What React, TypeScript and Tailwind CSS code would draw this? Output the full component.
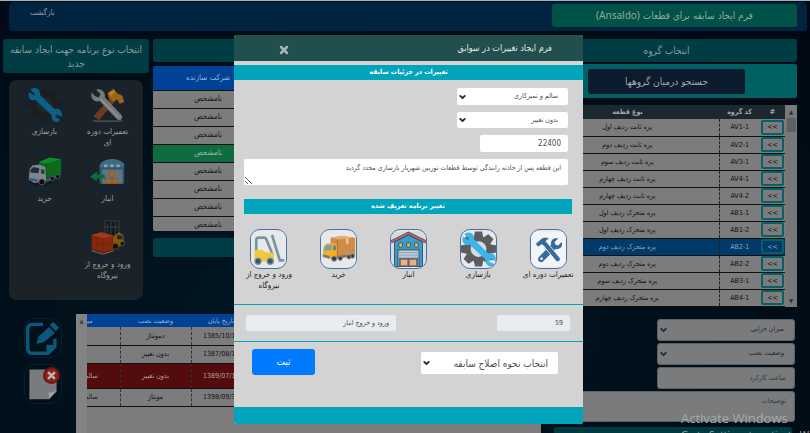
import type { ReactNode } from "react";
import { ChevronDown, X } from "lucide-react";

/* ---------- drawings ---------- */

const WRENCH =
  "M5 3 L10 8 L8 11 L3 7 C1 12 5 16 10 14 L29 32 C28 38 33 41 37 38 L32 34 L34 30 L39 33 C40 27 35 24 31 26 L14 9 C15 3 10 0 5 3 Z";

function Gear({ color, hole }: { color: string; hole: string }) {
  return (
    <g fill={color}>
      {[0, 45, 90, 135, 180, 225, 270, 315].map((a) => (
        <path key={a} d="M16 0 H24 L26 9 H14 Z" transform={`rotate(${a} 20 20)`} />
      ))}
      <circle cx="20" cy="20" r="14" />
      <circle cx="20" cy="20" r="9" fill={hole} />
    </g>
  );
}

function WrenchGear({ dim }: { dim?: boolean }) {
  return (
    <svg viewBox="0 0 40 40" className="h-full w-full">
      <Gear color={dim ? "#1b1f22" : "#5b5d60"} hole={dim ? "#20272c" : "#d9dcdf"} />
      <path
        d={WRENCH}
        fill={dim ? "#0c6189" : "#3bb5ea"}
        stroke={dim ? "#0c6189" : "#3bb5ea"}
        strokeWidth="1.5"
      />
      <circle cx="34" cy="34" r="1.5" fill={dim ? "#20272c" : "#e6eaed"} />
    </svg>
  );
}

function HammerWrench() {
  return (
    <svg viewBox="0 0 40 40" className="h-full w-full">
      <path d="M23 13 L28 17 L10 38 L4 33 Z" fill="#6d3a1e" />
      <path d="M20 7 L27 2 L31 7 L37 10 L39 17 L34 19 L31 14 L27 17 L22 13 Z" fill="#9a6415" />
      <path d="M21 7 L27 3 L29 6 L24 10 Z" fill="#b57f22" />
      <path
        d="M7 3 L12 8 L10 12 L5 10 L2 6 C0 13 5 18 11 16 L31 37 C34 40 39 36 36 32 L17 12 C18 6 13 1 7 3 Z"
        fill="#75797c"
      />
      <path d="M12 14 L33 35" stroke="#94989b" strokeWidth="1.5" />
      <path d="M3 39 H37" stroke="#55595c" strokeWidth="1.5" />
    </svg>
  );
}

function HammerWrenchFlat() {
  return (
    <svg viewBox="0 0 40 40" className="h-full w-full">
      <rect width="40" height="40" fill="#f3f4f6" />
      <g fill="#356c9f">
        <path d="M31 8 L27 12 L28 15 L31 16 L35 12 C37 17 33 21 28 20 L14 34 C10 37 6 33 9 29 L23 15 C22 10 26 7 31 8 Z" />
        <path
          d="M5 14 L12 8 C15 6 18 6 21 8 L17 11 L33 30 C35 34 30 36 28 33 L14 16 L12 15 L8 18 Z"
          stroke="#f3f4f6"
          strokeWidth="1"
        />
      </g>
      <circle cx="12" cy="31" r="1.5" fill="#f3f4f6" />
    </svg>
  );
}

function GreenTruck() {
  return (
    <svg viewBox="0 0 40 40" className="h-full w-full">
      <path d="M3 31 L20 35 L39 25 L39 28 L20 37 L4 34 Z" fill="#11161a" />
      <path d="M14 9 L26 4 L39 6 L39 22 L22 27 L14 23 Z" fill="#0c6a1c" />
      <path d="M14 9 L26 4 L39 6 L22 11 Z" fill="#118a28" />
      <path d="M22 11 V27" stroke="#0a5516" />
      <path d="M3 17 L6 13 L14 12 L21 15 L22 31 L8 33 L2 29 Z" fill="#7d858b" />
      <path d="M4 18 L7 15 L14 16 L13 22 L4 21 Z" fill="#1e2c36" />
      <path d="M16 17 L20 18 V23 L16 22 Z" fill="#2a3b47" />
      <path d="M3 27 L12 29 L12 32 L3 30 Z" fill="#2c5a8a" />
      <path d="M22 28 L38 22 L38 26 L22 32 Z" fill="#3a5366" />
      <g fill="#090c0e" stroke="#5b646b" strokeWidth="1">
        <circle cx="17" cy="32" r="3.5" />
        <circle cx="29" cy="28" r="2.5" />
        <circle cx="35" cy="26" r="2.5" />
      </g>
    </svg>
  );
}

function ArrowWarehouse() {
  return (
    <svg viewBox="0 0 40 40" className="h-full w-full">
      <path d="M11 34 V15 C13 3 37 3 39 15 V34 Z" fill="#315a70" />
      <path d="M11 15 H39 V12 C35 4 15 4 11 13 Z" fill="#3c6c84" />
      <path d="M14 34 V18 H37 V34 Z" fill="#64747d" />
      <g fill="#92a2aa">
        <rect x="16" y="12" width="4" height="3" />
        <rect x="23" y="12" width="4" height="3" />
        <rect x="30" y="12" width="4" height="3" />
      </g>
      <g fill="#a06a2d" stroke="#77502a" strokeWidth="0.5">
        <rect x="22" y="20" width="6" height="6" />
        <rect x="18" y="28" width="6" height="6" />
        <rect x="26" y="28" width="6" height="6" />
      </g>
      <path d="M0 26 L8 20 V23.5 H17 V28 H8 V31 Z" fill="#0b6d3d" />
    </svg>
  );
}

function BoxForklift() {
  return (
    <svg viewBox="0 0 40 40" className="h-full w-full">
      <path d="M17 1 H33 V23 H17 Z M20 4 V22 M24 2 V23 M29 2 V23 M17 8 H33" fill="#15191d" stroke="#30363a" strokeWidth="1.5" />
      <path d="M25 20 L33 14 L38 17 L39 28 L32 31 L25 30 Z" fill="#7e5c12" />
      <path d="M31 17 L37 18 V22 L31 22 Z" fill="#20262a" />
      <circle cx="29" cy="30" r="3.5" fill="#0d1012" stroke="#6b5110" />
      <circle cx="37" cy="27" r="2.5" fill="#0d1012" stroke="#6b5110" />
      <path d="M2 17 L13 14 L27 18 L26 34 L15 37 L2 33 Z" fill="#83290f" />
      <path d="M2 17 L13 14 L27 18 L15 21 Z" fill="#9c3c1d" />
      <path d="M15 21 V37 M2 25 L15 29 L27 25 M8 19 V35" stroke="#6b210c" fill="none" strokeWidth="0.5" />
      <path d="M2 35 L15 39 L27 35" stroke="#7a5d3a" fill="none" strokeWidth="1.5" />
    </svg>
  );
}

function Forklift() {
  return (
    <svg viewBox="0 0 40 40" className="h-full w-full">
      <rect width="40" height="40" fill="#e6e8ea" />
      <path d="M6 24 V10 Q6 7 9 7 H15 Q17 7 18 10 L25 27" fill="none" stroke="#7796a0" strokeWidth="3" />
      <path d="M24 4 L33 33 H38" fill="none" stroke="#7796a0" strokeWidth="3" />
      <path d="M4 21 H13 L17 24 H26 V34 H4 Z" fill="#f4c63d" />
      <g fill="#3c5563" stroke="#7796a0" strokeWidth="1.5">
        <circle cx="8" cy="34" r="3.5" />
        <circle cx="22" cy="34" r="3.5" />
      </g>
    </svg>
  );
}

function YellowTruck() {
  return (
    <svg viewBox="0 0 40 40" className="h-full w-full">
      <rect width="40" height="40" fill="#e6e8ea" />
      <path d="M11 7 L24 5 L39 7 V27 L20 30 L11 25 Z" fill="#d08a4a" />
      <path d="M11 7 L24 5 L39 7 L19 9 Z" fill="#e5ab6e" />
      <path d="M19 9 V29" stroke="#b06f35" />
      <path d="M30 8 V14" stroke="#efc894" strokeWidth="3" />
      <path d="M3 17 L6 14 L15 13 L18 15 V29 L9 31 L2 28 Z" fill="#f2b01e" />
      <path d="M4 18 L7 15 L12 15 L12 21 L3 22 Z" fill="#7f9db0" />
      <path d="M14 16 L17 16 V21 L14 21 Z" fill="#5f7c8e" />
      <path d="M2 26 L10 28 V31 L2 29 Z" fill="#787b7d" />
      <path d="M18 28 L38 26 V28 L18 31 Z" fill="#6b6e70" />
      <g fill="#3a3d40" stroke="#94989b" strokeWidth="1">
        <circle cx="15" cy="31" r="3" />
        <circle cx="22" cy="30.5" r="2.5" />
        <circle cx="32" cy="29" r="2.5" />
        <circle cx="36" cy="28" r="2.5" />
      </g>
    </svg>
  );
}

function Warehouse() {
  return (
    <svg viewBox="0 0 40 40" className="h-full w-full">
      <rect width="40" height="40" fill="#d9dcdf" />
      <path d="M4 40 V12 L20 4 L36 12 V40 Z" fill="#3a9cc8" stroke="#2c4a66" strokeWidth="1" />
      <path d="M0 12 L20 2 L40 12" fill="none" stroke="#2c4a66" strokeWidth="3.5" />
      <path d="M0 12 L20 2 L40 12" fill="none" stroke="#d0605e" strokeWidth="2" />
      <g fill="#f5c33b" stroke="#2c4a66" strokeWidth="1">
        <rect x="9" y="13" width="4" height="5" rx="1" />
        <rect x="18" y="13" width="4" height="5" rx="1" />
        <rect x="27" y="13" width="4" height="5" rx="1" />
      </g>
      <rect x="8" y="21" width="24" height="19" fill="#b9c8d6" stroke="#2c4a66" strokeWidth="1" />
      <path d="M8 24 H32 M8 27 H32" stroke="#8fa6ba" strokeWidth="1" />
      <rect x="9" y="30" width="22" height="10" fill="#5b6c80" />
      <g fill="#e8b384" stroke="#8a5a3a" strokeWidth="0.5">
        <rect x="11" y="32" width="8" height="7" />
        <rect x="21" y="32" width="8" height="7" />
      </g>
    </svg>
  );
}

function EditSheet() {
  return (
    <svg viewBox="0 0 40 40" className="h-full w-full">
      <path
        d="M20 4 H8 Q2 4 2 10 V32 Q2 38 8 38 H26 L34 30 V21"
        fill="none"
        stroke="#0b5878"
        strokeWidth="4"
      />
      <path d="M24 38 V28 H35 Z" fill="#0b5878" />
      <path d="M12 27 L15 18 L27 7 L34 14 L21 25 Z" fill="#0b5878" />
      <path d="M28 5 L32 1 L39 8 L35 12 Z" fill="#0b5878" />
    </svg>
  );
}

function DeleteSheet() {
  return (
    <svg viewBox="0 0 40 40" className="h-full w-full">
      <path d="M4 3 H36 V29 L27 38 H4 Z" fill="#797b7c" />
      <path d="M36 27 L27 38 Q28 31 25 30 Q32 31 36 27 Z" fill="#a3a5a6" />
      <circle cx="30" cy="10" r="10" fill="#6e1511" />
      <circle cx="30" cy="10" r="8" fill="#8c211a" />
      <path d="M26 6 L34 14 M34 6 L26 14" stroke="#b9b2b1" strokeWidth="3" />
    </svg>
  );
}

/* ---------- small parts ---------- */

function SelectBox({
  label,
  option,
  box,
  field,
}: {
  label: string;
  option: string;
  box: string;
  field: string;
}) {
  return (
    <div className={`relative shrink-0 ${box}`}>
      <select
        aria-label={label}
        className={`block h-full w-full appearance-none rounded-[3px] border outline-none ${field}`}
      >
        <option>{option}</option>
      </select>
      <ChevronDown
        size={9}
        strokeWidth={5}
        className="pointer-events-none absolute top-1/2 left-[2px] -translate-y-1/2 text-[#222a30]"
      />
    </div>
  );
}

function DarkTile({ label, children }: { label: string; children: ReactNode }) {
  return (
    <button className="flex flex-col items-center text-[8px] leading-[11px] text-[#a0a4a6]">
      <span className="block h-[41px] w-[39px] overflow-hidden rounded-xl border border-[#0c2340] p-px">
        {children}
      </span>
      <span className="mt-px w-12">{label}</span>
    </button>
  );
}

function LightTile({ label, children }: { label: string; children: ReactNode }) {
  return (
    <button className="flex w-[70px] flex-col items-center text-[8px] leading-[11px] font-medium text-[#1c1c1c]">
      <span className="block h-10 w-[37px] overflow-hidden rounded-[10px] border border-[#4a6fa5] bg-[#e6e8ea]">
        {children}
      </span>
      <span className="w-[60px]">{label}</span>
    </button>
  );
}

/* ---------- data ---------- */

const groups = [
  ["AV1-1", "پره ثابت ردیف اول"],
  ["AV2-1", "پره ثابت ردیف دوم"],
  ["AV3-1", "پره ثابت ردیف سوم"],
  ["AV4-1", "پره ثابت ردیف چهارم"],
  ["AV4-2", "پره ثابت ردیف چهارم"],
  ["AB1-1", "پره متحرک ردیف اول"],
  ["AB1-2", "پره متحرک ردیف اول"],
  ["AB2-1", "پره متحرک ردیف دوم"],
  ["AB2-2", "پره متحرک ردیف دوم"],
  ["AB3-1", "پره متحرک ردیف سوم"],
  ["AB4-1", "پره متحرک ردیف چهارم"],
];

const records = [
  ["1385/10/12", "دمونتاژ", ""],
  ["1387/08/15", "بدون تغییر", ""],
  ["1389/07/10", "بدون تغییر", "سالم و تمیزکاری"],
  ["1398/09/30", "مونتاژ", "سالم و تمیزکاری"],
];

/* ---------- sections ---------- */

function GroupColumn() {
  const field = "border-[#5d6164] bg-[#797b7d] pr-[10px] text-[7px] text-[#26292b]";
  return (
    <section className="mr-[13px] flex w-[30%] shrink-0 flex-col">
      <h2 className="h-[23px] shrink-0 rounded-[3px] bg-[#003c43] pr-[18px] text-center text-[10px] leading-[23px] text-[#8d9a9c]">
        انتخاب گروه
      </h2>
      <div className="mt-[2px] flex h-[34px] shrink-0 items-center justify-center rounded-[2px] bg-[#006064] pr-[18px]">
        <button className="h-[25px] w-[157px] rounded-[3px] bg-[#0d1b2e] text-[10px] text-[#a3a8ae]">
          جستجو درمیان گروهها
        </button>
      </div>
      <div className="mt-[7px] flex shrink-0">
        <div className="flex w-3 shrink-0 flex-col items-center bg-[#787878] text-[6px] leading-[13px] text-[#303030]">
          <span>▲</span>
          <span className="h-[14px] w-[9px] bg-[#606060]" />
          <span className="mt-auto">▼</span>
        </div>
        <table className="flex-1 table-fixed border-collapse text-center text-[7px] leading-[10px] text-[#0f0f0f]">
          <thead>
            <tr className="h-[14px] bg-[#1b282d] text-[#a2a7a9]">
              <th className="w-[25px]">#</th>
              <th className="w-[41px]">کد گروه</th>
              <th className="pr-[18px]">نوع قطعه</th>
            </tr>
          </thead>
          <tbody>
            {groups.map(([code, name]) => {
              const on = code === "AB2-1";
              return (
                <tr
                  key={code}
                  className={
                    on
                      ? "h-[17px] border-b border-[#101010] bg-[#003a6b] text-[#93a8bb]"
                      : "h-[17px] border-b border-[#101010] bg-[#7c7c7c]"
                  }
                >
                  <td>
                    <button
                      dir="ltr"
                      className="mx-auto block h-[15px] w-[23px] rounded-[2px] border-2 border-[#075f68] leading-[10px]"
                    >
                      &lt;&lt;
                    </button>
                  </td>
                  <td className="border-l border-dashed border-[#222]">{code}</td>
                  <td className="pr-[18px]">{name}</td>
                </tr>
              );
            })}
          </tbody>
        </table>
      </div>
      <form className="mt-[12px] mr-[2px] flex shrink-0 flex-col gap-[2px]">
        <SelectBox label="میزان خرابی" option="میزان خرابی" box="h-[22px] w-[138px]" field={field} />
        <SelectBox label="وضعیت نصب" option="وضعیت نصب" box="h-[22px] w-[138px]" field={field} />
        <input
          aria-label="ساعت کارکرد"
          placeholder="ساعت کارکرد"
          className="h-[22px] w-[138px] rounded-[3px] border border-[#5d6164] bg-[#797b7d] pr-2 text-[7px] placeholder:text-[#34383b]"
        />
        <textarea
          aria-label="توضیحات"
          placeholder="توضیحات"
          className="block h-[31px] w-full resize-none rounded-[3px] border border-[#5d6164] bg-[#797b7d] py-1 pr-2 text-[7px] placeholder:text-[#34383b]"
        />
        <button className="mt-[3px] mr-[3px] h-5 rounded-[3px] bg-[#00393f]" aria-label="ثبت سابقه" />
      </form>
    </section>
  );
}

function MakerColumn() {
  return (
    <section className="flex min-w-0 flex-1 flex-col">
      <div className="h-[23px] rounded-[2px] bg-[#003c43]" />
      <div className="mt-1 h-[165px] overflow-hidden rounded-[2px]">
        <table className="w-full table-fixed border-collapse text-center text-[8px] leading-[10px]">
          <thead>
            <tr className="h-6 bg-[#004296] text-[#9fb2cd]">
              <th />
              <th className="w-[110px] font-medium">شرکت سازنده</th>
            </tr>
          </thead>
          <tbody>
            {[0, 1, 2, 3, 4, 5, 6, 7].map((i) => (
              <tr
                key={i}
                className={
                  i === 3
                    ? "h-[18px] border-t border-[#101010] bg-[#0f6b40] text-[#a0b8aa]"
                    : "h-[18px] border-t border-[#101010] bg-[#7c7c7c] text-[#141414]"
                }
              >
                <td />
                <td>نامشخص</td>
              </tr>
            ))}
          </tbody>
        </table>
      </div>
      <div className="mt-[7px] h-[19px] rounded-[2px] bg-[#003c43]" />
    </section>
  );
}

function ProgramColumn() {
  return (
    <section className="w-[146px] shrink-0">
      <h2 className="rounded-[3px] bg-[#003c43] px-1 pt-[4px] pb-[2px] text-center text-[10px] leading-[14px] text-[#8d9a9c]">
        انتخاب نوع برنامه جهت ایجاد سابقه جدید
      </h2>
      <div className="mx-[6px] mt-[7px] grid h-[220px] grid-cols-2 content-start gap-y-[3px] rounded-lg bg-[#1c2328] px-1 pt-1">
        <DarkTile label="تعمیرات دوره ای">
          <HammerWrench />
        </DarkTile>
        <DarkTile label="بازسازی">
          <WrenchGear dim />
        </DarkTile>
        <DarkTile label="انبار">
          <ArrowWarehouse />
        </DarkTile>
        <DarkTile label="خرید">
          <GreenTruck />
        </DarkTile>
        <div className="flex justify-center pt-[10px]">
          <DarkTile label="ورود و خروج از نیروگاه">
            <BoxForklift />
          </DarkTile>
        </div>
      </div>
    </section>
  );
}

function RecordsRow() {
  return (
    <div className="mt-[14px] flex flex-1 overflow-hidden">
      <div className="flex flex-1 overflow-hidden bg-[#7c7c7c]">
        <div className="min-w-0 flex-1 overflow-hidden">
          <table className="w-[509px] table-fixed border-collapse text-center text-[7px] leading-[10px] text-[#101010]">
            <thead>
              <tr className="h-[13px] bg-[#004296] text-[#9fb2cd]">
                <th className="w-[290px]" />
                <th className="w-[60px] font-medium">تاریخ پایان</th>
                <th className="w-[71px] font-medium">وضعیت نصب</th>
                <th className="w-[88px] font-medium">میزان خرابی</th>
              </tr>
            </thead>
            <tbody>
              {records.map(([date, state, level], i) => (
                <tr
                  key={date}
                  className={
                    i === 2
                      ? "h-[25px] border-b border-[#101010] bg-[#530c0e] text-[#b3a0a0]"
                      : "h-[18px] border-b border-[#101010]"
                  }
                >
                  <td />
                  <td className="border-l border-dashed border-[#333]">{date}</td>
                  <td className="border-l border-dashed border-[#333]">{state}</td>
                  <td>{level}</td>
                </tr>
              ))}
            </tbody>
          </table>
        </div>
        <div className="w-[11px] bg-[#838383] text-center text-[6px] leading-[13px] text-[#404040]">▲</div>
      </div>
      <div className="flex w-[73px] flex-col items-center gap-[6px] pt-1 pl-[6px]">
        <button aria-label="ویرایش" className="h-10 w-[38px] rounded-xl border border-[#04203a] p-px">
          <EditSheet />
        </button>
        <button aria-label="حذف" className="h-10 w-[38px] rounded-xl border border-[#04203a] p-px">
          <DeleteSheet />
        </button>
      </div>
    </div>
  );
}

function Dialog() {
  const field = "border-[#ced4da] bg-white text-[#495057]";
  return (
    <div className="pointer-events-none absolute inset-0 flex items-start justify-center pt-[34px] pl-[7px]" dir="ltr">
      <div
        role="dialog"
        aria-label="فرم ایجاد تغییرات در سوابق"
        dir="rtl"
        className="pointer-events-auto w-full max-w-[349px] overflow-hidden rounded-[3px] bg-[#d3d3d3]"
      >
        <header className="flex h-[26px] items-center justify-between bg-[#214f4e] pr-[31px] pl-[44px]">
          <h1 className="pt-[2px] text-[9px] font-medium text-[#e4eaea]">فرم ایجاد تغییرات در سوابق</h1>
          <button aria-label="بستن" className="pt-1 text-[#a3b8b7]">
            <X size={12} strokeWidth={5} />
          </button>
        </header>
        <h2 className="mt-1 h-[15px] bg-[#00a5bc] text-center text-[7px] leading-[15px] font-bold text-white">
          تغییرات در جزئیات سابقه
        </h2>
        <div className="flex flex-col gap-[5px] pt-[7px] pr-[14px] pl-[9px]">
          <SelectBox label="میزان خرابی" option="سالم و تمیزکاری" box="h-[19px] w-[113px]" field={`${field} pr-[10px] text-[7px]`} />
          <SelectBox label="وضعیت نصب" option="بدون تغییر" box="h-[18px] w-[113px]" field={`${field} pr-[10px] text-[7px]`} />
          <input
            aria-label="ساعت کارکرد"
            defaultValue="22400"
            className="h-[19px] w-[90px] rounded-[3px] border border-[#ced4da] bg-white pr-[7px] text-[8px] text-[#495057]"
          />
          <textarea
            aria-label="توضیحات"
            defaultValue="این قطعه پس از حادثه رانندگی توسط قطعات توربین شهریار بازسازی مجدد گردید"
            className="block h-7 w-full resize rounded-[3px] border border-[#ced4da] bg-white py-[3px] pr-[7px] text-[7px] leading-3 text-[#495057]"
          />
        </div>
        <h2 className="mt-[13px] mr-[11px] ml-[10px] h-[15px] bg-[#00a5bc] text-center text-[7px] leading-[14px] font-bold text-white">
          تغییر برنامه تعریف شده
        </h2>
        <div className="flex h-[90px] justify-center pt-[15px]">
          <LightTile label="تعمیرات دوره ای">
            <HammerWrenchFlat />
          </LightTile>
          <LightTile label="بازسازی">
            <WrenchGear />
          </LightTile>
          <LightTile label="انبار">
            <Warehouse />
          </LightTile>
          <LightTile label="خرید">
            <YellowTruck />
          </LightTile>
          <LightTile label="ورود و خروج از نیروگاه">
            <Forklift />
          </LightTile>
        </div>
        <div className="flex h-[38px] items-center justify-between border-y border-[#00a5bc] pr-3 pl-[11px]">
          <input
            aria-label="شناسه"
            readOnly
            defaultValue="59"
            className="h-[18px] w-[75px] rounded-[3px] border border-[#ced4da] bg-[#e9ecef] pr-[7px] text-[7px] text-[#495057]"
          />
          <input
            aria-label="برنامه"
            readOnly
            defaultValue="ورود و خروج انبار"
            className="h-[18px] w-[152px] rounded-[3px] border border-[#ced4da] bg-[#e9ecef] pr-[7px] text-[7px] text-[#495057]"
          />
        </div>
        <div className="flex h-[65px] items-start justify-between pt-[7px] pr-6 pl-[18px]">
          <SelectBox
            label="نحوه اصلاح"
            option="انتخاب نحوه اصلاح سابقه"
            box="mt-[2px] h-6 w-[139px]"
            field={`${field} pr-[10px] text-[10px]`}
          />
          <button className="h-[26px] w-[63px] rounded-[3px] bg-[#007bff] text-[10px] leading-5 text-white">ثبت</button>
        </div>
        <footer className="h-[17px] bg-[#00a5bc]" />
      </div>
    </div>
  );
}

export default function App() {
  return (
    <main
      dir="rtl"
      className="relative flex h-screen flex-col overflow-hidden border-t border-[#a3b1b8] bg-[#000a14] bg-radial-[at_40%_75%] from-[#001722] to-[#000812] font-['DejaVu_Sans_Condensed','DejaVu_Sans',sans-serif]"
    >
      <header className="mt-px mr-[3px] ml-[9px] flex h-[29px] shrink-0 items-start justify-between rounded-[4px] bg-[#002340] pt-[2px] pr-[10px] pl-[21px]">
        <h1 className="h-[23px] w-[245px] rounded-[3px] bg-[#005148] text-center text-[10px] leading-[23px] text-[#93a8a4]">
          فرم ایجاد سابقه برای قطعات{" "}
          <span className="font-['Noto_Sans','DejaVu_Sans',sans-serif]">(Ansaldo)</span>
        </h1>
        <a href="#back" className="pt-[2px] text-[8px] leading-[14px] text-[#8f9dab]">
          بازگشت
        </a>
      </header>
      <div className="mt-2 flex min-h-0 flex-1 gap-[13px]">
        <GroupColumn />
        <div className="flex min-w-0 flex-1 flex-col pl-[3px]">
          <div className="flex gap-1">
            <MakerColumn />
            <ProgramColumn />
          </div>
          <RecordsRow />
        </div>
      </div>
      <Dialog />
      <p
        dir="ltr"
        className="pointer-events-none absolute right-0 bottom-[-10px] w-[129px] font-['Open_Sans','Noto_Sans',sans-serif] text-[#a6aaac]"
      >
        <span className="block text-[13px] leading-[18px] whitespace-nowrap">Activate Windows</span>
        <span className="block text-[10px] leading-[16px] whitespace-nowrap">Go to Settings to activate W</span>
      </p>
    </main>
  );
}
